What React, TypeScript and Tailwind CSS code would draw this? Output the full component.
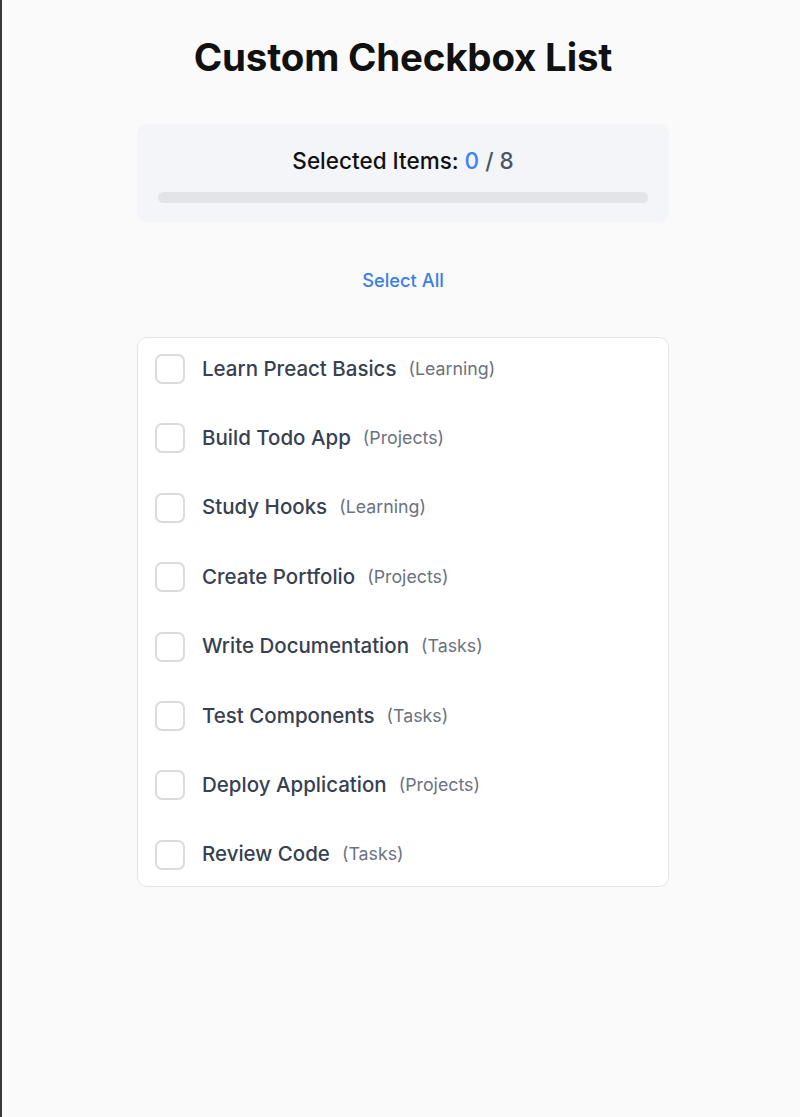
import { useState } from 'react';

interface Item {
  id: number;
  label: string;
  category: string;
}

const ITEMS: Item[] = [
  { id: 1, label: 'Learn Preact Basics', category: 'Learning' },
  { id: 2, label: 'Build Todo App', category: 'Projects' },
  { id: 3, label: 'Study Hooks', category: 'Learning' },
  { id: 4, label: 'Create Portfolio', category: 'Projects' },
  { id: 5, label: 'Write Documentation', category: 'Tasks' },
  { id: 6, label: 'Test Components', category: 'Tasks' },
  { id: 7, label: 'Deploy Application', category: 'Projects' },
  { id: 8, label: 'Review Code', category: 'Tasks' },
];

export default function App() {
  const [checked, setChecked] = useState<number[]>([]);

  const toggle = (id: number) => {
    setChecked((prev) => (prev.includes(id) ? prev.filter((x) => x !== id) : [...prev, id]));
  };

  const allSelected = checked.length === ITEMS.length;
  const percent = (checked.length / ITEMS.length) * 100;

  return (
    <div className="min-h-[1117px] bg-[#fafafb] border-l-2 border-[#3a3a3a] font-['Inter',sans-serif]">
      <div className="w-[532px] ml-[135px] flex flex-col pt-[35px]">
        <h1 className="text-center text-[38.5px] leading-[44px] font-bold text-[#111111] tracking-[-0.2px]">
          Custom Checkbox List
        </h1>

        {/* Stats */}
        <div className="mt-[45px] h-[98px] rounded-[10px] bg-[#f3f5f8] px-[21px] pt-[22px]">
          <p className="text-center text-[22.5px] leading-[30px] font-medium text-[#111111]">
            Selected Items: <span className="text-[#3b82f6]">{checked.length}</span>{' '}
            <span className="text-[#4b5563]">/ {ITEMS.length}</span>
          </p>
          <div className="mt-[16px] h-[11px] rounded-full bg-[#e2e4e8] overflow-hidden">
            <div className="h-full bg-[#3b82f6] rounded-full" style={{ width: `${percent}%` }} />
          </div>
        </div>

        <button
          type="button"
          onClick={() => setChecked(allSelected ? [] : ITEMS.map((i) => i.id))}
          className="mt-[46px] self-center text-[18.3px] leading-[24px] font-medium text-[#3b7fe6]"
        >
          {allSelected ? 'Deselect All' : 'Select All'}
        </button>

        {/* List */}
        <ul className="mt-[45px] border border-[#e3e5e8] rounded-[10px] bg-white py-[7px] px-[17px] flex flex-col gap-[21.4px]">
          {ITEMS.map((item) => {
            const on = checked.includes(item.id);
            return (
              <li
                key={item.id}
                onClick={() => toggle(item.id)}
                className="h-[48px] flex items-center cursor-pointer"
              >
                <span
                  className={
                    on
                      ? 'w-[30px] h-[30px] rounded-[7px] border-2 border-[#3b82f6] bg-[#3b82f6] flex items-center justify-center'
                      : 'w-[30px] h-[30px] rounded-[7px] border-2 border-[#d9dbdf] bg-white'
                  }
                >
                  {on && (
                    <svg width="16" height="16" viewBox="0 0 24 24" fill="none" stroke="white" strokeWidth="3">
                      <path d="M5 12l5 5 9-10" />
                    </svg>
                  )}
                </span>
                <span className="ml-[17px] text-[20.5px] font-medium text-[#374151]">{item.label}</span>
                <span className="ml-[12px] text-[17.8px] text-[#6b7280]">({item.category})</span>
              </li>
            );
          })}
        </ul>
      </div>
    </div>
  );
}
